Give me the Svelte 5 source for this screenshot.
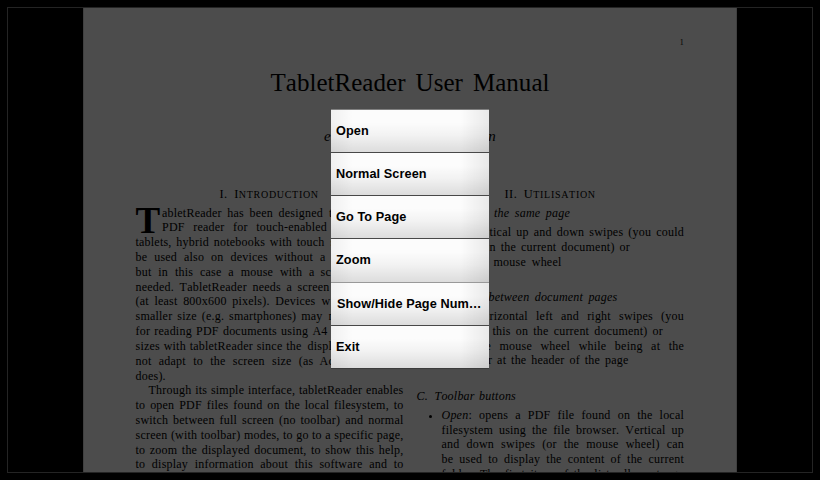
<script>
  // w: width of the justified run; post: letters that continue up to the menu's edge
  const intro = [
    { t: 'tablets, hybrid notebooks with touch', w: 189, post: 's' },
    { t: 'be used also on devices without a', w: 190 },
    { t: 'but in this case a mouse with a', w: 179, post: 'sc' },
    { t: 'needed. TabletReader needs a screen', w: 194 },
    { t: '(at least 800x600 pixels). Devices', w: 180, post: 'w' },
    { t: 'smaller size (e.g. smartphones) may', w: 187, post: 'n' },
    { t: 'for reading PDF documents using A4', w: 192 },
    { t: 'sizes with tabletReader since the', w: 166, post: 'displ' },
    { t: 'not adapt to the screen size (as', w: 178, post: 'Ac' },
    { t: 'does).', w: 30 },
    { t: 'Through its simple interface, tabletReader enables', w: 268, indent: true },
    { t: 'to open PDF files found on the local filesystem, to', w: 268 },
    { t: 'switch between full screen (no toolbar) and normal', w: 268 },
    { t: 'screen (with toolbar) modes, to go to a specific page,', w: 268 },
    { t: 'to zoom the displayed document, to show this help,', w: 268 },
    { t: 'to display information about this software and to', w: 268 }
  ];
  // x: where the visible run starts inside the right column
  const samePage = [
    { x: 73, t: 'tical up and down swipes (you could', w: 194.5 },
    { x: 73, t: 'n the current document) or', w: 140.5 },
    { x: 77, t: 'mouse wheel', w: 68 }
  ];
  const between = [
    { x: 73, t: 'rizontal left and right swipes (you', w: 194.5 },
    { x: 76, t: 'this on the current document) or', w: 170.5 },
    { x: 69, t: 'e mouse wheel while being at the', w: 198.5 },
    { x: 71.5, t: 'r at the header of the page', w: 140.5 }
  ];
  const toolbar = [
    'filesystem using the file browser. Vertical up',
    'and down swipes (or the mouse wheel) can',
    'be used to display the content of the current',
    'folder. The first item of the list, allows to go'
  ];
  const menu = ['Open', 'Normal Screen', 'Go To Page', 'Zoom', 'Show/Hide Page Numbers', 'Exit'];
</script>

{#snippet rightLine(l)}
  <div class="line" style:padding-left="{l.x}px">
    <span class="run" style:width="{l.w}px">{l.t}</span>
  </div>
{/snippet}

<main class="screen">
  <div class="frame">
    <article class="page">
      <div class="folio">1</div>
      <h1>TabletReader User Manual</h1>
      <div class="author"><span>e</span><span>n</span></div>
      <div class="columns">
        <section class="left">
          <h2 class="h-intro">I.&ensp;I<small>NTRODUCTION</small></h2>
          <div class="lead">
            <span class="drop">T</span>
            <div>
              <div class="line"><span class="run" style:width="161px">abletReader has been designed</span><span class="post">t</span></div>
              <div class="line"><span class="run" style:width="165px">PDF reader for touch-enabled</span></div>
            </div>
          </div>
          {#each intro as l}
            <div class="line">
              <span class="run" class:indent={l.indent} style:width="{l.w}px">{l.t}</span>{#if l.post}<span class="post">{l.post}</span>{/if}
            </div>
          {/each}
        </section>
        <section class="right">
          <h2 class="h-util">II.&ensp;U<small>TILISATION</small></h2>
          <h3 class="same"><span>the same page</span></h3>
          {#each samePage as l}{@render rightLine(l)}{/each}
          <h3 class="betw"><span>between document pages</span></h3>
          {#each between as l}{@render rightLine(l)}{/each}
          <h3 class="tool"><i>C.</i><span>Toolbar buttons</span></h3>
          <div class="bullets">
            <div class="line item"><b class="dot"></b><span class="run"><em>Open</em>: opens a PDF file found on the local</span></div>
            {#each toolbar as t}<div class="line"><span class="run">{t}</span></div>{/each}
          </div>
        </section>
      </div>
    </article>
    <nav class="menu">
      {#each menu as m, i}<button class:tall={i === 3} class:long={i === 4}><span>{m}</span></button>{/each}
    </nav>
  </div>
</main>

<style>
  :global(body) { background: #000; overflow: hidden; }
  .screen { box-sizing: border-box; width: 820px; height: 480px; padding: 7px; background: #000; }
  .frame {
    box-sizing: border-box; position: relative; width: 806px; height: 466px;
    border: 1px solid #242424; display: flex; justify-content: center; overflow: hidden;
  }
  .page {
    box-sizing: border-box; width: 654px; height: 464px; background: #4c4c4c; color: #000; overflow: hidden;
    border-left: 1px solid #404040; border-right: 1px solid #404040;
    font: 12px/14.82px "Liberation Serif", "Times New Roman", serif;
    font-kerning: none; letter-spacing: .22px;
  }
  .folio { margin-top: 29px; height: 12px; line-height: 12px; padding-right: 52px; text-align: right; font-size: 8px; }
  h1 {
    margin: 17px auto 0; width: 279px; height: 34px; line-height: 34px; font-size: 25px; font-weight: 400;
    letter-spacing: .03px; white-space: nowrap; text-align-last: justify;
  }
  .author { display: flex; justify-content: space-between; width: 172px; margin: 28px auto 0; height: 17px; font: italic 15px/17px "Liberation Serif", serif; }
  .columns { display: flex; gap: 13px; margin: 39.6px 0 0 51.5px; }
  .left { width: 268px; flex: none; }
  .right { width: 268px; flex: none; }
  h2 { margin: 0; font-size: 12.4px; font-weight: 400; height: 21px; line-height: 19px; white-space: nowrap; letter-spacing: .45px; }
  h2 small { font-size: 10px; letter-spacing: .7px; }
  .h-intro { padding-left: 84px; }
  .h-util { padding-left: 88px; }
  .line { display: flex; height: 14.82px; white-space: nowrap; }
  .run { flex: none; text-align-last: justify; }
  .indent { box-sizing: border-box; padding-left: 13px; }
  .post { padding-left: 6px; }
  .lead { display: flex; height: 29.64px; }
  .drop { width: 26.5px; font-size: 37px; font-weight: 700; line-height: 29px; letter-spacing: 0; }
  h3 { margin: 0; font-size: 12px; font-weight: 400; font-style: italic; line-height: 15px; height: 15px; display: flex; white-space: nowrap; }
  h3 span { text-align-last: justify; }
  .same { padding-left: 77.5px; margin-bottom: 4.3px; }
  .same span { width: 76px; }
  .betw { padding-left: 72px; margin: 20.2px 0 4.4px; }
  .betw span { width: 129px; }
  .tool { margin: 20.7px 0 4px; }
  .tool i { width: 18px; }
  .tool span { width: 81.5px; }
  .bullets { padding-left: 25px; }
  .bullets .run { width: 242.5px; }
  .item { margin-left: -13px; }
  .dot { flex: none; width: 3px; height: 3px; margin: 7px 10px 0 0; border-radius: 50%; background: #000; }
  .menu {
    position: absolute; left: 323px; top: 101px; width: 158px; display: flex; flex-direction: column;
    border-top: 1px solid #808080;
  }
  .menu button {
    box-sizing: border-box; width: 158px; height: 43px; margin: 0; padding: 0 0 0 5px; border: 0;
    border-bottom: 1px solid #484848; border-radius: 0; text-align: left; color: #000;
    font: bold 12.7px/20px "Liberation Sans", Arial, sans-serif; letter-spacing: .08px;
    background: linear-gradient(#fff0 30%, #0000000a 60%, #00000020), linear-gradient(90deg, #0000000c, #0000 14%, #0000 82%, #00000014), #fcfcfc;
  }
  .menu button.tall { height: 44px; padding-bottom: 1px; border-bottom-color: #999; }
  .menu button:last-child { border-bottom-color: #3c3c3c; }
  .menu button.long { padding-left: 6px; }
  .menu span { display: block; overflow: hidden; white-space: nowrap; text-overflow: ellipsis; }
</style>
